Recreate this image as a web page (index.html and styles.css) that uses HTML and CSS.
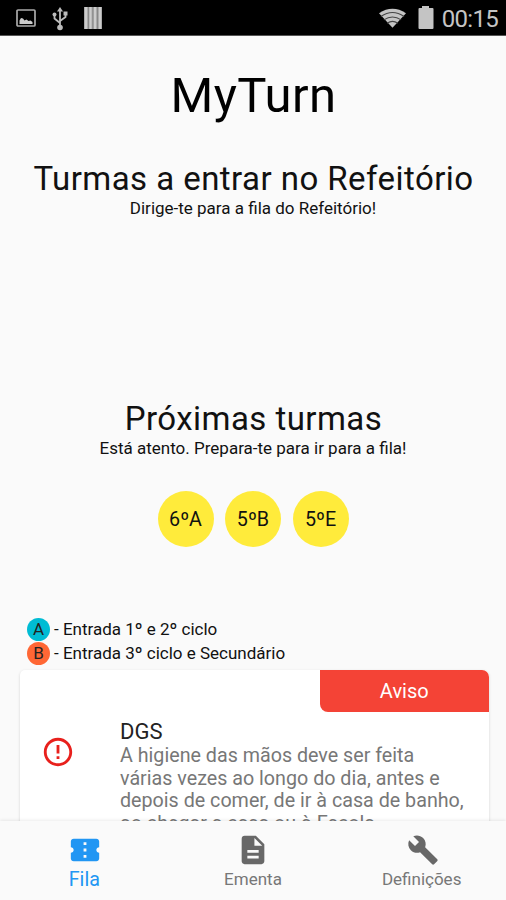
FILE: index.html
```html
<!DOCTYPE html>
<html lang="pt">
<head>
<meta charset="utf-8">
<title>MyTurn</title>
<link rel="stylesheet" href="styles.css">
</head>
<body>
<div class="app">
  <header class="status">
    <svg class="s-image" width="20" height="18" viewBox="0 0 20 18"><rect x="1" y="1" width="18" height="16" rx="1" fill="none" stroke="#aaa" stroke-width="1.7"/><path d="M3.500 15v-3.500l1.500-2.500 2 .5 1.500 2 2-1 2 1.500 2-.5 2 1.500v2z" fill="#ccc"/></svg>
    <svg class="s-usb" width="16" height="24" viewBox="0 0 16 24"><path d="M8 3v17M2.500 8v3.500L8 16M13.500 6v4L8 14" fill="none" stroke="#bbb" stroke-width="1.8"/><path d="M8 0l3 4.500H5z" fill="#bbb"/><circle cx="8" cy="20.500" r="2.800" fill="#bbb"/><circle cx="2.500" cy="7.500" r="2" fill="#bbb"/><path d="M11.500 4.500h4v4h-4z" fill="#bbb"/></svg>
    <svg class="s-bars" width="18" height="22" viewBox="0 0 18 22"><path d="M0 0h18v22H0z" fill="#aaa"/><path d="M2 0v22M6.500 0v22M11 0v22M16 0v22" stroke="#ccc" stroke-width="2"/><path d="M4.500 0v22M8.800 0v22M13.500 0v22" stroke="#888"/></svg>
    <svg class="s-wifi" width="27" height="20" viewBox="0 0 28 20"><path d="M0 5Q14-4 28 5L14 20z" fill="#c4c4c4"/><path d="M2 8.500Q14 0 26 8.500M5 12q9-6 18 0M8.500 15.500q5.500-4 11 0" fill="none" stroke="#444" stroke-width="1.100"/></svg>
    <svg class="s-battery" width="16" height="23" viewBox="0 0 16 23"><path d="M4 0h7v2h3.500q1 0 1 1v19q0 1-1 1H1.500q-1 0-1-1V3q0-1 1-1H4z" fill="#c4c4c4"/></svg>
    <span class="clock">00:15</span>
  </header>
  <main class="content">
    <h1 class="brand">MyTurn</h1>
    <section class="entering">
      <h2 class="heading">Turmas a entrar no Refeitório</h2>
      <p class="hint">Dirige-te para a fila do Refeitório!</p>
    </section>
    <section class="next">
      <h2 class="heading">Próximas turmas</h2>
      <p class="hint">Está atento. Prepara-te para ir para a fila!</p>
      <div class="classes">
        <span class="class">6ºA</span><span class="class">5ºB</span><span class="class">5ºE</span>
      </div>
    </section>
    <ul class="legend">
      <li><span class="dot dot-a">A</span><span>- Entrada 1º e 2º ciclo</span></li>
      <li><span class="dot dot-b">B</span><span>- Entrada 3º ciclo e Secundário</span></li>
    </ul>
    <article class="card">
      <div class="tag">Aviso</div>
      <div class="notice">
        <svg class="alert" width="34" height="34" viewBox="0 0 24 24" fill="#e8201c"><path d="M11 15h2v2h-2zm0-8h2v6h-2zm.99-5C6.470 2 2 6.480 2 12s4.470 10 9.990 10C17.520 22 22 17.520 22 12S17.520 2 11.990 2zM12 20c-4.420 0-8-3.580-8-8s3.580-8 8-8 8 3.580 8 8-3.580 8-8 8z"/></svg>
        <div class="text">
          <h3>DGS</h3>
          <p>A higiene das mãos deve ser feita<br>várias vezes ao longo do dia, antes e<br>depois de comer, de ir à casa de banho,<br>ao chegar a casa ou à Escola.</p>
        </div>
      </div>
    </article>
  </main>
  <nav class="tabs">
    <a class="tab active"><svg width="34" height="34" viewBox="0 0 24 24" fill="currentColor"><path d="M20 12c0-1.100.9-2 2-2V6c0-1.100-.9-2-2-2H4c-1.100 0-1.990.9-1.990 2v4c1.100 0 1.990.9 1.990 2s-.89 2-2 2v4c0 1.100.9 2 2 2h16c1.100 0 2-.9 2-2v-4c-1.100 0-2-.9-2-2zm-7 5.500h-2v-2h2v2zm0-4.500h-2v-2h2v2zm0-4.500h-2v-2h2v2z"/></svg><span>Fila</span></a>
    <a class="tab"><svg width="34" height="34" viewBox="0 0 24 24" fill="currentColor"><path d="M14 2H6c-1.100 0-1.990.9-1.990 2L4 20c0 1.100.89 2 1.990 2H18c1.100 0 2-.9 2-2V8l-6-6zm2 16H8v-2h8v2zm0-4H8v-2h8v2zm-3-5V3.500L18.500 9H13z"/></svg><span>Ementa</span></a>
    <a class="tab"><svg class="wrench" width="34" height="34" viewBox="0 0 24 24" fill="currentColor"><path d="M22.700 19l-9.100-9.100c.9-2.300.4-5-1.500-6.900-2-2-5-2.400-7.400-1.300L9 6 6 9 1.600 4.700C.4 7.100.9 10.100 2.900 12.100c1.900 1.900 4.600 2.400 6.900 1.500l9.100 9.100c.4.4 1 .4 1.400 0l2.300-2.300c.5-.4.5-1.100.1-1.400z"/></svg><span>Definições</span></a>
  </nav>
</div>
</body>
</html>
```
FILE: styles.css
```css
* { box-sizing: border-box; }
body { margin: 0; background: #fafafa; color: #111; font-family: Roboto, "Liberation Sans", sans-serif; }
h1, h2, h3, p, ul { margin: 0; padding: 0; font-weight: 400; }
.app { height: 900px; display: flex; flex-direction: column; overflow: hidden; }
.status { flex: none; height: 36px; background: #000; border-bottom: 1px solid #555; display: flex; align-items: center; padding: 0 8px 0 16px; color: #c4c4c4; }
.s-usb { margin-left: 16px; margin-top: 2px; }
.s-bars { margin-left: 16px; }
.s-wifi { margin-left: auto; }
.s-battery { margin-left: 12px; margin-top: -1px; }
.clock { margin-left: 8px; font-size: 24px; line-height: 35px; letter-spacing: -.7px; padding-top: 3px; }
.content { flex: 1; min-height: 0; overflow: hidden; display: flex; flex-direction: column; }
.brand { flex: none; margin-top: 31px; padding-left: 1px; text-align: center; font-size: 49px; line-height: 58px; letter-spacing: .4px; color: #000; }
.entering { flex: none; height: 240px; margin-top: 34px; text-align: center; }
.heading { padding-left: 1px; font-size: 33px; line-height: 39px; letter-spacing: .45px; }
.hint { font-size: 17px; line-height: 20px; }
.next { flex: none; height: 218px; text-align: center; }
.classes { display: flex; justify-content: center; gap: 11.500px; margin-top: 32.500px; }
.class { width: 56px; height: 56px; border-radius: 50%; background: #ffeb3b; font-size: 19.700px; line-height: 57px; }
.legend { flex: none; list-style: none; padding-left: 27px; font-size: 17px; line-height: 24px; }
.legend li { height: 24px; display: flex; align-items: center; gap: 4px; }
.dot { width: 23px; height: 23px; border-radius: 50%; text-align: center; line-height: 23px; color: #222; }
.dot-a { background: #00bcd4; }
.dot-b { background: #ff6735; }
.card { flex: none; width: 468.500px; height: 190px; margin: 5px 0 0 20px; background: #fff; border-radius: 5px 6px 0 0; box-shadow: 0 1px 3px rgba(0,0,0,.16); }
.tag { width: 168.500px; height: 42px; margin-left: auto; border-radius: 0 7px 0 8px; background: #f44336; color: #fff; font-size: 20px; line-height: 43px; text-align: center; }
.notice { display: flex; padding-left: 21px; }
.alert { margin-top: 22.500px; }
.text { margin-left: 45px; padding-top: 7px; white-space: nowrap; }
.text h3 { font-size: 22px; line-height: 25px; color: #222; }
.text p { padding-top: 1px; font-size: 19.700px; line-height: 22.500px; color: #777; }
.tabs { flex: none; height: 79px; display: grid; grid-template-columns: repeat(3, 1fr); background: #fafafa; position: relative; box-shadow: 0 -1px 3px rgba(0,0,0,.08); }
.tab { display: flex; flex-direction: column; align-items: center; padding-top: 12px; color: #686868; font-size: 17px; line-height: 25px; }
.tab svg { margin-left: 1px; }
.tab span { color: #777; }
.tab.active, .tab.active span { color: #2196f3; font-size: 19.700px; }
.tab .wrench { width: 32px; margin-left: 2px; }
```
